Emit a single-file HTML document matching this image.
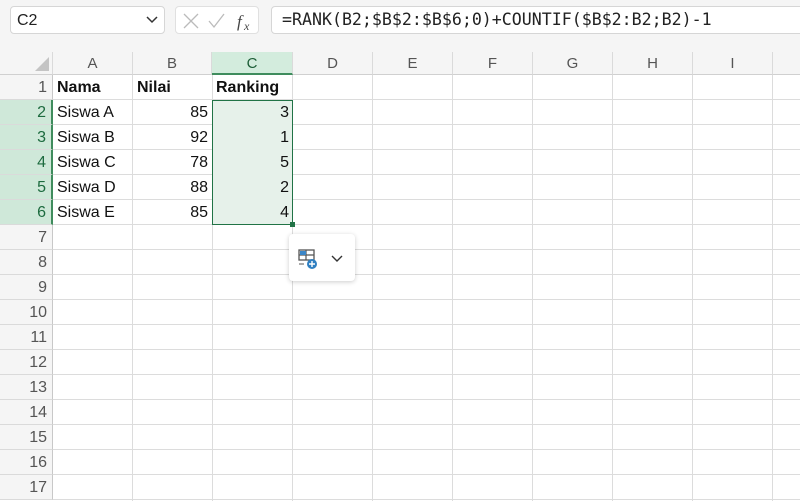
<!DOCTYPE html><html><head><style>
*{margin:0;padding:0;box-sizing:border-box}
body{width:800px;height:501px;overflow:hidden;background:#fff;font-family:"Liberation Sans",Arial,sans-serif;position:relative}
.top{position:absolute;left:0;top:0;width:800px;height:52px;background:#f5f5f5}
.nb{position:absolute;left:10px;top:6px;width:155px;height:28px;background:#fff;border:1px solid #d6d6d6;border-radius:4px;font-size:16px;padding:5px 6px;color:#222}
.btns{position:absolute;left:175px;top:6px;width:84px;height:28px;background:#fff;border:1px solid #e0e0e0;border-radius:4px}
.fb{position:absolute;left:271px;top:6px;width:535px;height:28px;background:#fff;border:1px solid #d6d6d6;border-radius:4px;font-family:"DejaVu Sans Mono","Liberation Mono",monospace;font-size:16.6px;padding:3px 10px;color:#222;white-space:nowrap}
.ch{position:absolute;top:52px;height:23px;background:#f5f5f5;border-right:1px solid #dadada;border-bottom:1px solid #d0d0d0;font-size:15px;color:#555;text-align:center;line-height:23px}
.rh{position:absolute;left:0;width:53px;height:25px;background:#f5f5f5;border-bottom:1px solid #dadada;border-right:1px solid #c8c8c8;font-size:16px;color:#555;text-align:right;padding-right:5px;line-height:25px}
.rh.s{background:#cfe8d9;color:#1d6b3f;border-right:2px solid #3f8c5d}
.grid{position:absolute;left:53px;top:75px;width:747px;height:426px;
background-image:repeating-linear-gradient(to bottom,transparent 0 24px,#dcdcdc 24px 25px),repeating-linear-gradient(to right,transparent 0 79px,#dcdcdc 79px 80px)}
.c{position:absolute;height:25px;line-height:25px;font-size:16px;color:#111;padding:0 4px}
.b{font-weight:bold}
.r{text-align:right}
</style></head><body>
<div class="top"></div>
<div class="nb">C2<svg style="position:absolute;right:6px;top:9px" width="12" height="8"><path d="M1 1l5 5 5-5" stroke="#333" stroke-width="1.5" fill="none"/></svg></div>
<div class="btns"><svg width="84" height="28"><path d="M8 7l14 14M22 7L8 21" stroke="#bbb" stroke-width="1.3"/><path d="M33 14l5 6 10-13" stroke="#bbb" stroke-width="1.3" fill="none"/><text x="61" y="20" font-family="Liberation Serif,serif" font-style="italic" font-size="17" fill="#444">f</text><text x="68" y="23" font-family="Liberation Serif,serif" font-style="italic" font-size="12" fill="#444">x</text></svg></div>
<div class="fb">=RANK(B2;$B$2:$B$6;0)+COUNTIF($B$2:B2;B2)-1</div>
<div class="ch" style="left:0;width:53px;background:#f5f5f5"><svg style="position:absolute;left:35px;top:5px" width="14" height="14"><path d="M14 0V14H0Z" fill="#c4c4c4"/></svg></div>
<div class="ch" style="left:53px;width:80px">A</div>
<div class="ch" style="left:133px;width:79px">B</div>
<div class="ch" style="left:212px;width:81px;background:#d3ecdd;color:#1d5e37;border-bottom:2px solid #3f8c5d">C</div>
<div class="ch" style="left:293px;width:80px">D</div>
<div class="ch" style="left:373px;width:80px">E</div>
<div class="ch" style="left:453px;width:80px">F</div>
<div class="ch" style="left:533px;width:80px">G</div>
<div class="ch" style="left:613px;width:80px">H</div>
<div class="ch" style="left:693px;width:80px">I</div>
<div class="ch" style="left:773px;width:30px"></div>
<div class="grid"></div>
<div style="position:absolute;left:212px;top:100px;width:81px;height:125px;background:#e6f1ea;border:1.5px solid #217346"></div>
<div style="position:absolute;left:290px;top:222px;width:5px;height:5px;background:#217346"></div>
<div class="rh" style="top:75px">1</div>
<div class="rh s" style="top:100px">2</div>
<div class="rh s" style="top:125px">3</div>
<div class="rh s" style="top:150px">4</div>
<div class="rh s" style="top:175px">5</div>
<div class="rh s" style="top:200px">6</div>
<div class="rh" style="top:225px">7</div>
<div class="rh" style="top:250px">8</div>
<div class="rh" style="top:275px">9</div>
<div class="rh" style="top:300px">10</div>
<div class="rh" style="top:325px">11</div>
<div class="rh" style="top:350px">12</div>
<div class="rh" style="top:375px">13</div>
<div class="rh" style="top:400px">14</div>
<div class="rh" style="top:425px">15</div>
<div class="rh" style="top:450px">16</div>
<div class="rh" style="top:475px">17</div>
<div class="c b" style="left:53px;top:75px">Nama</div>
<div class="c b" style="left:133px;top:75px">Nilai</div>
<div class="c b" style="left:212px;top:75px">Ranking</div>
<div class="c" style="left:53px;top:100px">Siswa A</div>
<div class="c" style="left:53px;top:125px">Siswa B</div>
<div class="c" style="left:53px;top:150px">Siswa C</div>
<div class="c" style="left:53px;top:175px">Siswa D</div>
<div class="c" style="left:53px;top:200px">Siswa E</div>
<div class="c r" style="left:133px;width:79px;top:100px">85</div>
<div class="c r" style="left:133px;width:79px;top:125px">92</div>
<div class="c r" style="left:133px;width:79px;top:150px">78</div>
<div class="c r" style="left:133px;width:79px;top:175px">88</div>
<div class="c r" style="left:133px;width:79px;top:200px">85</div>
<div class="c r" style="left:212px;width:81px;top:100px">3</div>
<div class="c r" style="left:212px;width:81px;top:125px">1</div>
<div class="c r" style="left:212px;width:81px;top:150px">5</div>
<div class="c r" style="left:212px;width:81px;top:175px">2</div>
<div class="c r" style="left:212px;width:81px;top:200px">4</div>
<div style="position:absolute;left:289px;top:234px;width:66px;height:47px;background:#fff;border-radius:4px;box-shadow:0 1px 5px rgba(0,0,0,.2)">
<svg width="66" height="47"><rect x="10" y="16" width="15" height="10" fill="none" stroke="#555" stroke-width="1.3"/><path d="M10 21h15M17 16v10" stroke="#555" stroke-width="1.2"/><rect x="11" y="17" width="6" height="4" fill="#3b86c7"/><path d="M10 30h5" stroke="#555"/><circle cx="23" cy="30" r="5" fill="#2f7fc1"/><path d="M20 30h6M23 27v6" stroke="#fff" stroke-width="1.4"/><path d="M43 22l5 5 5-5" stroke="#333" stroke-width="1.4" fill="none"/></svg></div>
</body></html>
